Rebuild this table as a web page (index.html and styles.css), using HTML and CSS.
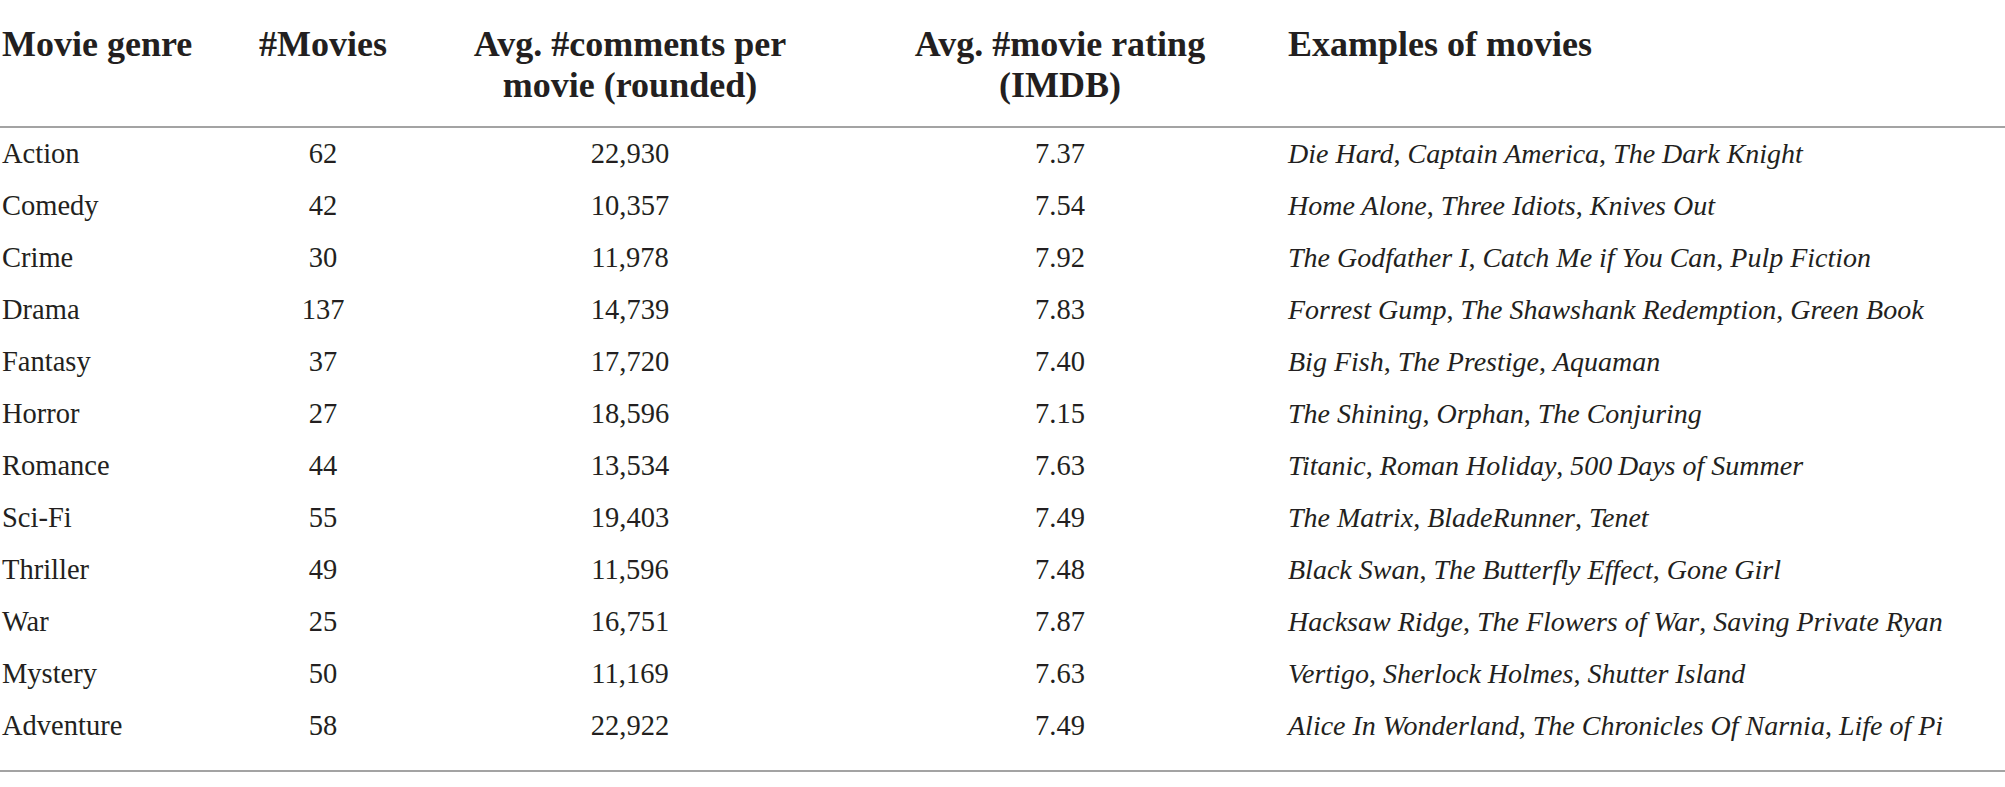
FILE: index.html
```html
<!DOCTYPE html>
<html lang="en">
<head>
    <meta charset="UTF-8">
    <title>Movie genres</title>
    <link rel="stylesheet" href="styles.css">
</head>
<body>
    <table class="genre-table">
        <colgroup>
            <col class="col-genre">
            <col class="col-count">
            <col class="col-comments">
            <col class="col-rating">
            <col class="col-examples">
        </colgroup>
        <thead>
            <tr>
                <th class="left">Movie genre</th>
                <th>#Movies</th>
                <th>Avg. #comments per<br>movie (rounded)</th>
                <th>Avg. #movie rating<br>(IMDB)</th>
                <th class="left examples">Examples of movies</th>
            </tr>
        </thead>
        <tbody>
            <tr>
                <td class="left">Action</td><td>62</td><td>22,930</td><td>7.37</td>
                <td class="left examples"><i>Die Hard</i>, <i>Captain America</i>, <i>The Dark Knight</i></td>
            </tr>
            <tr>
                <td class="left">Comedy</td><td>42</td><td>10,357</td><td>7.54</td>
                <td class="left examples"><i>Home Alone</i>, <i>Three Idiots</i>, <i>Knives Out</i></td>
            </tr>
            <tr>
                <td class="left">Crime</td><td>30</td><td>11,978</td><td>7.92</td>
                <td class="left examples"><i>The Godfather I</i>, <i>Catch Me if You Can</i>, <i>Pulp Fiction</i></td>
            </tr>
            <tr>
                <td class="left">Drama</td><td>137</td><td>14,739</td><td>7.83</td>
                <td class="left examples"><i>Forrest Gump</i>, <i>The Shawshank Redemption</i>, <i>Green Book</i></td>
            </tr>
            <tr>
                <td class="left">Fantasy</td><td>37</td><td>17,720</td><td>7.40</td>
                <td class="left examples"><i>Big Fish</i>, <i>The Prestige</i>, <i>Aquaman</i></td>
            </tr>
            <tr>
                <td class="left">Horror</td><td>27</td><td>18,596</td><td>7.15</td>
                <td class="left examples"><i>The Shining</i>, <i>Orphan</i>, <i>The Conjuring</i></td>
            </tr>
            <tr>
                <td class="left">Romance</td><td>44</td><td>13,534</td><td>7.63</td>
                <td class="left examples"><i>Titanic</i>, <i>Roman Holiday</i>, <i>500&#8201;Days of Summer</i></td>
            </tr>
            <tr>
                <td class="left">Sci-Fi</td><td>55</td><td>19,403</td><td>7.49</td>
                <td class="left examples"><i>The Matrix</i>, <i>BladeRunner</i>, <i>Tenet</i></td>
            </tr>
            <tr>
                <td class="left">Thriller</td><td>49</td><td>11,596</td><td>7.48</td>
                <td class="left examples"><i>Black Swan</i>, <i>The Butterfly Effect</i>, <i>Gone Girl</i></td>
            </tr>
            <tr>
                <td class="left">War</td><td>25</td><td>16,751</td><td>7.87</td>
                <td class="left examples"><i>Hacksaw Ridge</i>, <i>The Flowers of War</i>, <i>Saving Private Ryan</i></td>
            </tr>
            <tr>
                <td class="left">Mystery</td><td>50</td><td>11,169</td><td>7.63</td>
                <td class="left examples"><i>Vertigo</i>, <i>Sherlock Holmes</i>, <i>Shutter Island</i></td>
            </tr>
            <tr class="last-row">
                <td class="left">Adventure</td><td>58</td><td>22,922</td><td>7.49</td>
                <td class="left examples"><i>Alice In Wonderland</i>, <i>The Chronicles Of Narnia</i>, <i>Life of Pi</i></td>
            </tr>
        </tbody>
    </table>
</body>
</html>
```

FILE: styles.css
```css
/* Global */
body {
    margin: 0;
    background: #fff;
    color: #231f20;
    font-family: "Liberation Serif", "Times New Roman", serif;
}

.genre-table {
    width: 100%;
    table-layout: fixed;
    border-collapse: collapse;
    border-bottom: 2px solid #a3a3a3;
}

.col-genre { width: 250px; }
.col-count { width: 146px; }
.col-comments { width: 468px; }
.col-rating { width: 392px; }

th, td {
    padding: 0;
    text-align: center;
    white-space: nowrap;
}

th {
    font-size: 36px;
    font-weight: bold;
    line-height: 41px;
    vertical-align: top;
    padding: 24px 0 20px;
}

thead tr {
    border-bottom: 2px solid #a3a3a3;
}

td {
    font-size: 28.5px;
    height: 52px;
    vertical-align: middle;
}

td.examples {
    font-size: 28px;
}

.left {
    text-align: left;
    padding-left: 2px;
}

.examples {
    padding-left: 32px;
}

.last-row td {
    height: 70px;
    vertical-align: top;
    line-height: 51px;
}
```
